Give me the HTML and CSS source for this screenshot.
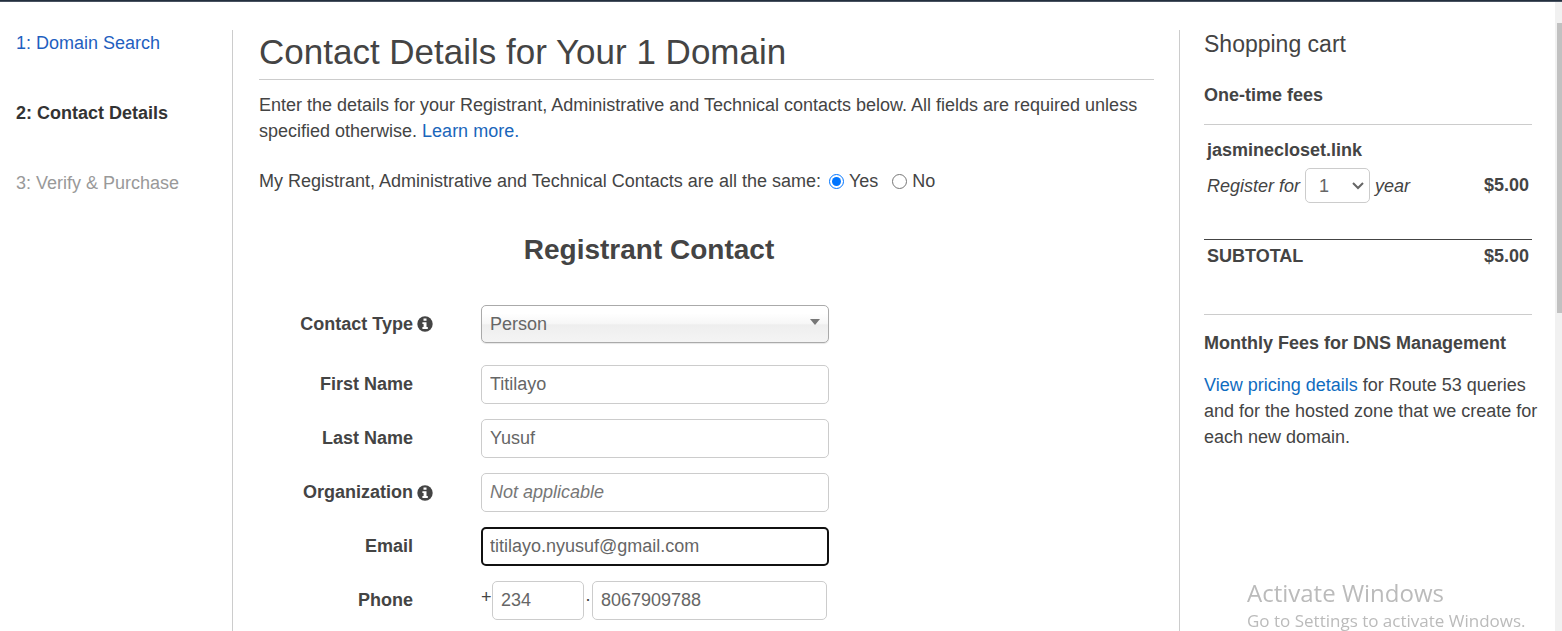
FILE: index.html
```html
<!DOCTYPE html>
<html lang="en">
<head>
<meta charset="utf-8">
<title>Contact Details</title>
<link rel="stylesheet" href="styles.css">
</head>
<body>
<svg class="defs" aria-hidden="true">
  <symbol id="info" viewBox="0 0 16 16">
    <circle cx="8" cy="8" r="7.7" fill="#444"/>
    <path d="M6.5 2.6h3v2.2h-3zM5.4 6.2h4.1v4.9h1.3v1.9H5.4v-1.9h1.2V8.1H5.4z" fill="#fff"/>
  </symbol>
</svg>
<div class="topbar"></div>
<div class="page">
  <nav class="steps" aria-label="Steps">
    <a class="step" href="#search">1: Domain Search</a>
    <span class="step step-current">2: Contact Details</span>
    <span class="step step-next">3: Verify &amp; Purchase</span>
  </nav>
  <main class="main">
    <h1 class="title">Contact Details for Your 1 Domain</h1>
    <p class="intro">Enter the details for your Registrant, Administrative and Technical contacts below. All fields are required unless specified otherwise. <a href="#learn">Learn more.</a></p>
    <div class="same" role="radiogroup" aria-labelledby="same-label">
      <span id="same-label">My Registrant, Administrative and Technical Contacts are all the same:</span>
      <label class="choice"><input type="radio" name="same" checked>Yes</label>
      <label class="choice"><input type="radio" name="same">No</label>
    </div>
    <form class="form">
      <h2 class="form-title">Registrant Contact</h2>
      <div class="row row-type">
        <label class="label" for="type">Contact Type</label>
        <svg class="info"><use href="#info"/></svg>
        <div class="select-box">
          <select class="field type" id="type"><option>Person</option><option>Company</option></select>
          <svg class="caret" viewBox="0 0 10 6"><path d="M0 0h10L5 6z" fill="#777"/></svg>
        </div>
      </div>
      <div class="row">
        <label class="label" for="first">First Name</label>
        <input class="field" id="first" type="text" value="Titilayo">
      </div>
      <div class="row">
        <label class="label" for="last">Last Name</label>
        <input class="field" id="last" type="text" value="Yusuf">
      </div>
      <div class="row">
        <label class="label" for="org">Organization</label>
        <svg class="info"><use href="#info"/></svg>
        <input class="field" id="org" type="text" placeholder="Not applicable">
      </div>
      <div class="row">
        <label class="label" for="email">Email</label>
        <input class="field field-active" id="email" type="email" value="titilayo.nyusuf@gmail.com">
      </div>
      <div class="row">
        <label class="label" for="phone">Phone</label>
        <div class="phone">
          <span class="plus">+</span>
          <input class="field code" type="text" value="234" aria-label="Country code">
          <span class="dot">.</span>
          <input class="field" id="phone" type="text" value="8067909788">
        </div>
      </div>
    </form>
  </main>
  <aside class="cart">
    <h2 class="cart-title">Shopping cart</h2>
    <h3 class="cart-heading">One-time fees</h3>
    <table class="fees">
      <tbody>
        <tr><th class="domain" colspan="2" scope="row">jasminecloset.link</th></tr>
        <tr class="register">
          <td>
            <div class="term">
              <label for="years">Register for</label>
              <div class="select-box">
                <select class="field years" id="years"><option>1</option><option>2</option><option>3</option></select>
                <svg class="chevron" viewBox="0 0 12 8"><path d="M1 1l5 5 5-5" fill="none" stroke="#666" stroke-width="2"/></svg>
              </div>
              <span>year</span>
            </div>
          </td>
          <td class="price">$5.00</td>
        </tr>
      </tbody>
      <tfoot>
        <tr class="subtotal"><th scope="row">SUBTOTAL</th><td class="price">$5.00</td></tr>
      </tfoot>
    </table>
    <h3 class="cart-heading">Monthly Fees for DNS Management</h3>
    <p class="pricing"><a href="#pricing">View pricing details</a> for Route 53 queries and for the hosted zone that we create for each new domain.</p>
  </aside>
  <div class="scroll"><div class="thumb"></div></div>
</div>
<div class="watermark">
  <div class="watermark-title">Activate Windows</div>
  <div>Go to Settings to activate Windows.</div>
</div>
</body>
</html>
```
FILE: styles.css
```css
* { box-sizing: border-box; }
body {
  margin: 0;
  min-height: 100vh;
  display: flex;
  flex-direction: column;
  background: #fff;
  color: #444;
  font: 18px/26px "Liberation Sans", Arial, sans-serif;
}
h1, h2, h3, p { margin: 0; }
a { color: #1a66bb; text-decoration: none; }
input, select { font: inherit; margin: 0; }
.defs { position: absolute; width: 0; height: 0; }
.topbar { height: 2px; background: #232f3e; border-bottom: 1px solid #485260; }
.page { flex: 1; display: flex; padding-left: 16px; }

.steps {
  flex: none;
  width: 216px;
  margin-top: 28px;
  display: flex;
  flex-direction: column;
  gap: 44px;
}
.step { color: #1f5fbf; }
.step-current { color: #333; font-weight: bold; }
.step-next { color: #999; }

.main {
  flex: 1;
  min-width: 0;
  margin-top: 28px;
  padding: 0 25px 11px 26px;
  border-left: 1px solid #ccc;
}
.title {
  height: 50px;
  border-bottom: 1px solid #ccc;
  font-size: 35px;
  line-height: 44px;
  font-weight: normal;
}
.intro { padding-top: 12px; }
.same { display: flex; align-items: center; padding-top: 24px; }
.choice { display: flex; align-items: center; gap: 5px; margin-left: 8px; }
.choice + .choice { margin-left: 14px; }
.choice input { width: 15px; height: 15px; accent-color: #0075ff; }

.form {
  max-width: 780px;
  display: flex;
  flex-direction: column;
  gap: 15px;
}
.form-title {
  padding: 38px 0 22px;
  font-size: 28px;
  line-height: 36px;
  text-align: center;
}
.row {
  display: grid;
  grid-template-columns: 154px 16px 348px;
  column-gap: 4px;
  align-items: center;
}
.label { padding-bottom: 2px; text-align: right; font-weight: bold; }
.row-type { margin-bottom: 7px; }
.row-type .label { padding-bottom: 0; }
.info { width: 16px; height: 16px; }
.field {
  width: 100%;
  height: 39px;
  padding: 0 8px;
  border: 1px solid #ccc;
  border-radius: 5px;
  background: #fff;
  color: #666;
}
.row .field::placeholder { color: #777; font-style: italic; opacity: 1; }
.row > :last-child { grid-column: 3; margin-left: 44px; width: 348px; }
.field-active { border: 2px solid #111; padding: 0 7px; outline: none; }
.select-box { position: relative; }
.select-box select { appearance: none; display: block; }
.type {
  height: 38px;
  border-color: #aaa;
  background: linear-gradient(#fff 20%, #f6f6f6 50%, #eee 52%, #f4f4f4 100%);
  box-shadow: 0 1px 1px rgba(0, 0, 0, 0.1);
}
.caret { position: absolute; right: 9px; top: 14px; width: 10px; height: 6px; pointer-events: none; }
.phone { display: flex; }
.phone .field { width: 235px; }
.phone .code { width: 92px; }
.plus { width: 11px; line-height: 32px; }
.dot { width: 8px; line-height: 28px; text-align: center; }

.cart {
  flex: none;
  width: 376px;
  margin-top: 28px;
  padding: 0 23px 0 24px;
  border-left: 1px solid #ccc;
}
.cart-title { font-size: 23px; line-height: 28px; font-weight: normal; }
.cart-heading { padding-top: 24px; font-size: 18px; line-height: 26px; }
.fees {
  width: 100%;
  margin: 16px 0 0;
  border-collapse: collapse;
  border-top: 1px solid #ccc;
  border-bottom: 1px solid #ccc;
}
.fees th, .fees td { padding: 0 3px; text-align: left; vertical-align: top; }
.fees .domain { padding-top: 12px; }
.register td { height: 76px; padding-top: 5px; }
.term { display: flex; align-items: center; gap: 5px; font-style: italic; }
.years { width: 65px; height: 35px; padding: 0 13px; font-style: normal; }
.chevron { position: absolute; right: 6px; top: 14px; width: 12px; height: 8px; pointer-events: none; }
.fees .price { text-align: right; font-weight: bold; line-height: 34px; }
.subtotal { border-top: 1px solid #444; }
.fees .subtotal th, .fees .subtotal td { height: 75px; line-height: 32px; }
.cart .fees + .cart-heading { padding-top: 15px; }
.pricing { padding-top: 16px; margin-right: -8px; }
.pricing a { color: #0f6cbf; }

.scroll { flex: none; width: 7px; padding: 21px 0 0 2px; background: #f1f1f1; }
.thumb { height: 290px; background: #c1c1c1; }

.watermark {
  position: fixed;
  right: 31px;
  bottom: 0;
  width: 284px;
  color: #bbb;
  font: 17px/20px "Open Sans", "Noto Sans", sans-serif;
  white-space: nowrap;
}
.watermark-title { font-size: 24px; line-height: 36px; }
```
